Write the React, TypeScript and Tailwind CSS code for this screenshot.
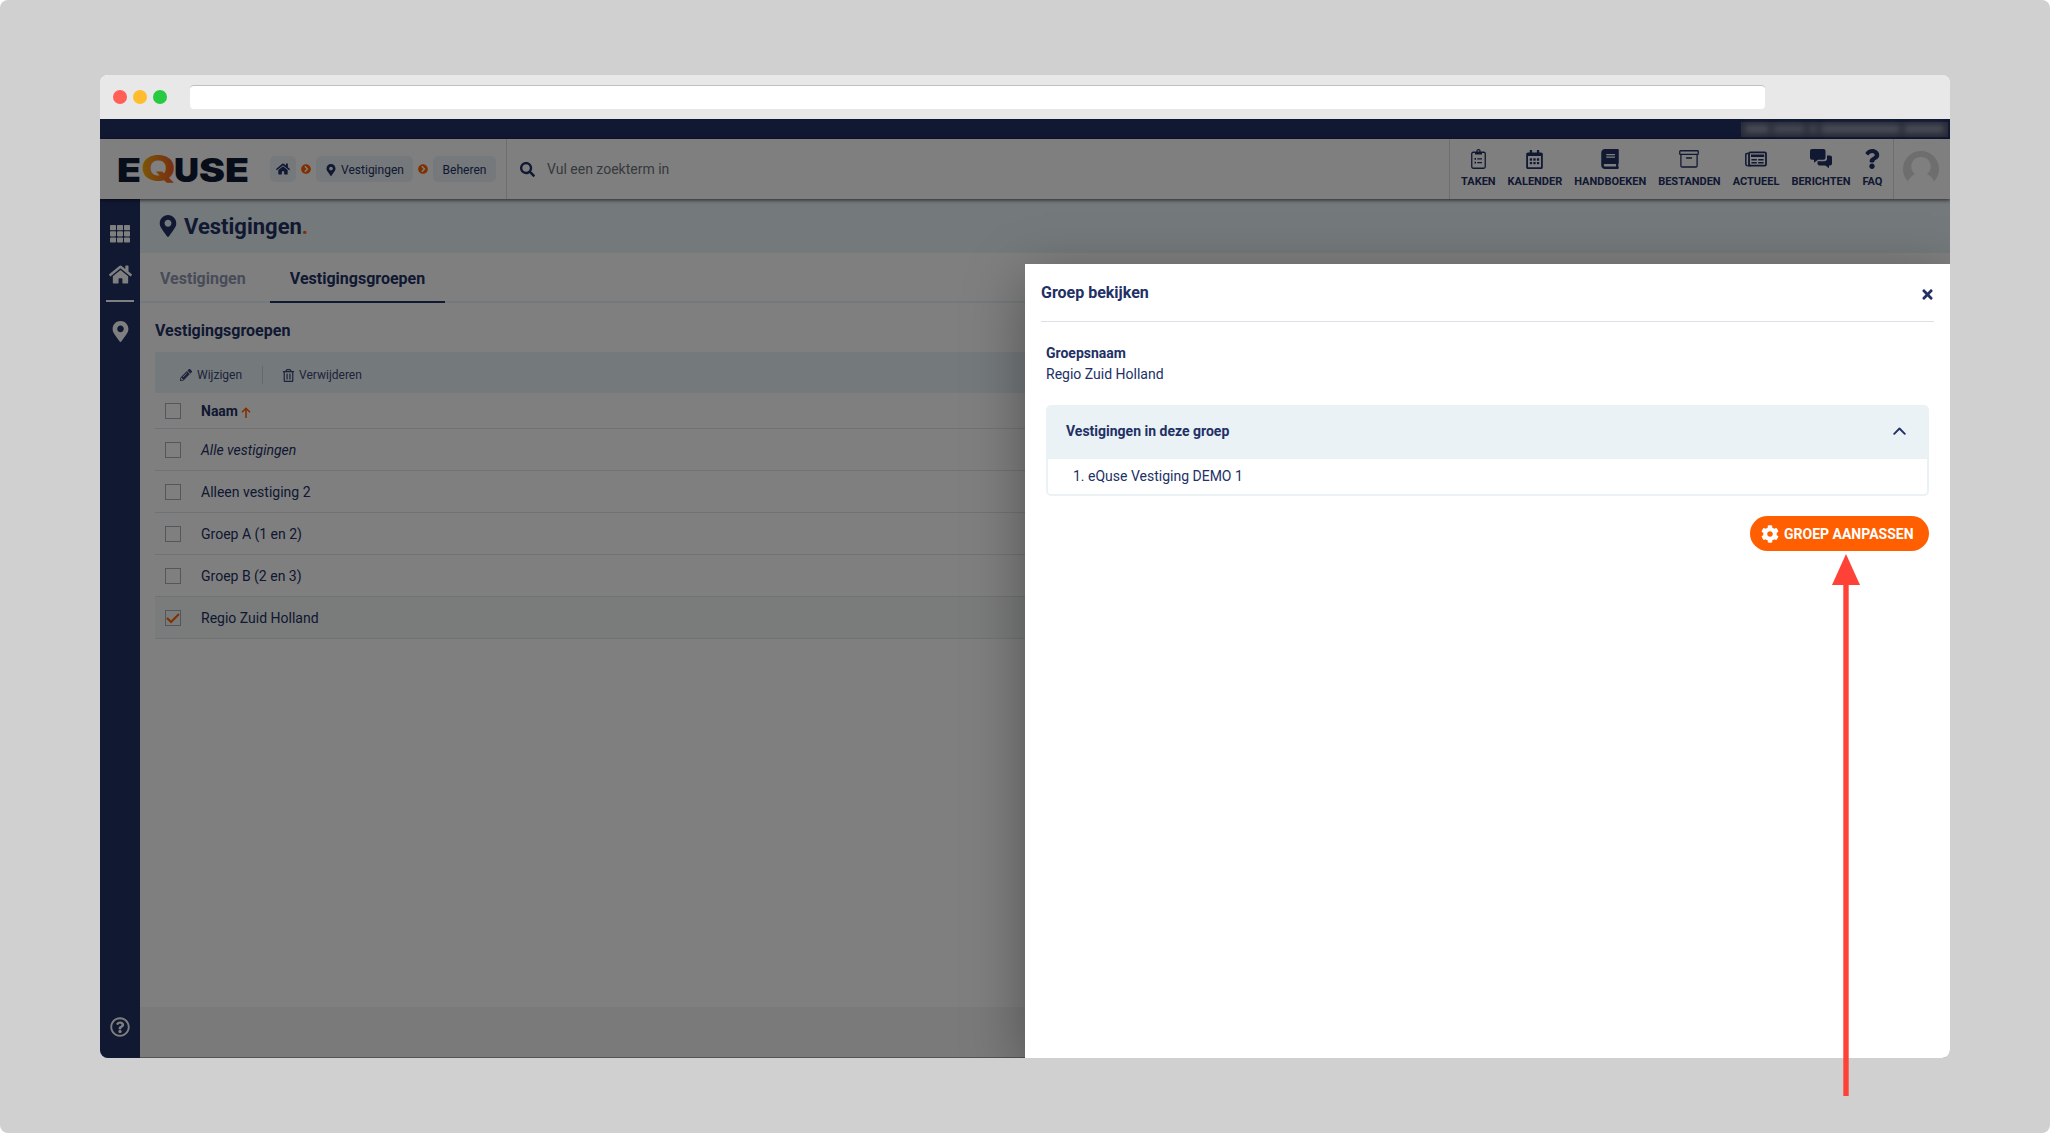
import type { ReactNode } from "react"
import {
  FaBook,
  FaChevronCircleRight,
  FaCog,
  FaHome,
  FaMapMarkerAlt,
  FaPencilAlt,
  FaQuestion,
  FaRegCalendarAlt,
  FaRegQuestionCircle,
  FaRegTrashAlt,
  FaSearch,
  FaTimes,
} from "react-icons/fa"

const rows = [
  { name: "Alle vestigingen", italic: true },
  { name: "Alleen vestiging 2" },
  { name: "Groep A (1 en 2)" },
  { name: "Groep B (2 en 3)" },
  { name: "Regio Zuid Holland", checked: true },
]

function ClipboardIcon() {
  return (
    <svg width="15" height="20" viewBox="0 0 15 20" fill="none" stroke="currentColor">
      <rect x="0.75" y="3.25" width="13.5" height="16" rx="1.5" strokeWidth="1.3" />
      <path d="M4 3h7v2.500H4z" fill="currentColor" stroke="none" />
      <circle cx="7.5" cy="2.3" r="1.6" strokeWidth="1.2" />
      <path d="M6.2 9.8H11M6.2 13.6H11" strokeWidth="1.3" />
      <path d="M3.5 9.8H5M3.5 13.6H5" strokeWidth="1.8" />
    </svg>
  )
}

function ArchiveIcon() {
  return (
    <svg width="20" height="18" viewBox="0 0 20 18" fill="none" stroke="currentColor" strokeWidth="1.3">
      <rect x="0.75" y="0.75" width="18.5" height="3.7" rx="0.8" />
      <path d="M1.9 4.5v11.2c0 .8.5 1.3 1.3 1.3h13.6c.8 0 1.3-.5 1.3-1.3V4.5" />
      <path d="M7.5 8h5" strokeLinecap="round" />
    </svg>
  )
}

function NewsIcon() {
  return (
    <svg width="22" height="16" viewBox="0 0 22 16" fill="none" stroke="currentColor">
      <path d="M3.500 2.500H1.800c-.6 0-1 .4-1 1V13c0 1 .7 1.700 1.600 1.700" strokeWidth="1.500" />
      <rect x="4" y="1.300" width="17" height="13.400" rx="1.200" strokeWidth="1.800" />
      <path d="M6 4.800h13.200" strokeWidth="2.400" />
      <path d="M6.400 8.700h5.400M13.200 8.700h5.400M6.400 11.800h5.400M13.200 11.800h5.400" strokeWidth="1.500" />
      <path d="M2.500 14.700H6" strokeWidth="1.800" />
    </svg>
  )
}

function ChatIcon() {
  return (
    <svg width="22" height="20" viewBox="0 0 22 20" fill="currentColor">
      <path d="M2 0h11.500a2 2 0 0 1 2 2v6.800a2 2 0 0 1-2 2H8L4 13.800v-3H2a2 2 0 0 1-2-2V2a2 2 0 0 1 2-2z" />
      <path d="M17 6.500h3a2 2 0 0 1 2 2v6a2 2 0 0 1-2 2h-1V19.300l-3.700-2.800H9.500a2 2 0 0 1-2-2v-2.200h6.800a2.700 2.700 0 0 0 2.700-2.700z" />
    </svg>
  )
}

function GridIcon() {
  return (
    <svg width="20" height="18" viewBox="0 0 20 18" fill="currentColor">
      {[0, 7, 14].map((x) =>
        [0, 6.2, 12.4].map((y) => <rect key={`${x}-${y}`} x={x} y={y} width="6" height="5.2" rx="0.8" />)
      )}
    </svg>
  )
}

function Logo() {
  return (
    <svg width="136" height="56" viewBox="0 -11 136 56" className="block">
      <defs>
        <linearGradient id="q" x1="0" x2="1" y1="0" y2="0">
          <stop offset="0" stopColor="#f9ac12" />
          <stop offset="1" stopColor="#ef5a1d" />
        </linearGradient>
      </defs>
      <g fontFamily="Inter, sans-serif" fontWeight="900" fontSize="33" fill="#0f1a33">
        <text x="-1" y="30" textLength="24" lengthAdjust="spacingAndGlyphs">E</text>
        <text x="56" y="30" textLength="25" lengthAdjust="spacingAndGlyphs">U</text>
        <text x="81" y="30" textLength="26" lengthAdjust="spacingAndGlyphs">S</text>
        <text x="107" y="30" textLength="24" lengthAdjust="spacingAndGlyphs">E</text>
      </g>
      <text
        x="23"
        y="28.500"
        fontFamily="Inter, sans-serif"
        fontWeight="800"
        fontSize="36"
        fill="url(#q)"
        textLength="35"
        lengthAdjust="spacingAndGlyphs"
      >
        Q
      </text>
    </svg>
  )
}

function NavItem({ icon, label }: { icon: ReactNode; label: string }) {
  return (
    <div className="flex flex-col items-center">
      <div className="flex h-5 items-center">{icon}</div>
      <span className="mt-[5px] text-[11px] leading-4 font-bold">{label}</span>
    </div>
  )
}

function Checkbox({ checked }: { checked?: boolean }) {
  return (
    <span className="flex h-4 w-4 items-center justify-center border border-[#a0b0b6]">
      {checked && (
        <svg width="14" height="12" viewBox="0 0 14 12" fill="none" stroke="#ff5f00" strokeWidth="2">
          <path d="M1 6l4 4 8-8" />
        </svg>
      )}
    </span>
  )
}

function Header() {
  return (
    <header className="relative z-10 flex h-[60px] shrink-0 bg-white shadow-[0_1px_4px_rgba(0,0,0,0.7)]">
      <div className="flex w-[407px] items-center border-r border-[#dcdcdc] pl-[18px]">
        <div className="w-[152px]">
          <Logo />
        </div>
        <div className="flex items-center gap-[5px] text-[12px]">
          <span className="flex h-[26px] w-[26px] items-center justify-center rounded-[5px] bg-[#eaf2f6]">
            <FaHome size={14} />
          </span>
          <FaChevronCircleRight size={10} color="#ff5f00" />
          <span className="flex h-[26px] w-[97px] items-center justify-center gap-1 rounded-[5px] bg-[#eaf2f6] pt-px">
            <FaMapMarkerAlt size={12} />
            Vestigingen
          </span>
          <FaChevronCircleRight size={10} color="#ff5f00" />
          <span className="flex h-[26px] w-[63px] items-center justify-center rounded-[5px] bg-[#eaf2f6] pt-px">
            Beheren
          </span>
        </div>
      </div>
      <div className="flex flex-1 items-center gap-3 pl-[13px] text-[#6c757d]">
        <FaSearch size={15} color="#223065" />
        <span className="text-[14px]">Vul een zoekterm in</span>
      </div>
      <nav className="flex w-[445px] items-start gap-3 border-r border-l border-[#dcdcdc] pt-[10px] pl-[11px]">
        <NavItem icon={<ClipboardIcon />} label="TAKEN" />
        <NavItem icon={<FaRegCalendarAlt size={19} />} label="KALENDER" />
        <NavItem icon={<FaBook size={20} />} label="HANDBOEKEN" />
        <NavItem icon={<ArchiveIcon />} label="BESTANDEN" />
        <NavItem icon={<NewsIcon />} label="ACTUEEL" />
        <NavItem icon={<ChatIcon />} label="BERICHTEN" />
        <NavItem icon={<FaQuestion size={20} />} label="FAQ" />
      </nav>
      <div className="flex w-14 items-center pl-[9px]">
        <svg width="36" height="36" viewBox="0 0 36 36">
          <circle cx="18" cy="18" r="18" fill="#dcdcdc" />
          <path
            d="M18 6a9.500 9.500 0 0 1 6 17c3 1.500 5 3.500 7 7l-3 6H8l-3-6c2-3.500 4-5.500 7-7A9.500 9.500 0 0 1 18 6z"
            fill="#fff"
          />
        </svg>
      </div>
    </header>
  )
}

function Sidebar() {
  return (
    <aside className="flex w-10 shrink-0 flex-col items-center bg-[#223065] text-white">
      <div className="mt-[26px]">
        <GridIcon />
      </div>
      <FaHome size={23} className="mt-5" />
      <div className="mt-[14px] h-[2px] w-7 bg-white" />
      <FaMapMarkerAlt size={21} className="mt-[19px]" />
      <FaRegQuestionCircle size={20} className="mt-auto mb-[21px]" />
    </aside>
  )
}

function Content() {
  return (
    <main className="flex flex-1 flex-col">
      <div className="flex h-[54px] items-center gap-[5px] bg-[#e9f2f6] pl-[17px]">
        <FaMapMarkerAlt size={22} />
        <h1 className="text-[22px] font-bold">
          Vestigingen<span className="text-[#ff5f00]">.</span>
        </h1>
      </div>
      <div className="flex h-[50px] border-b-2 border-[#e9f2f6] text-[16px] font-bold">
        <span className="w-[130px] pt-[14px] pl-5 text-[#9097b2]">Vestigingen</span>
        <span className="h-[50px] w-[175px] border-b-2 border-[#223065] pt-[14px] text-center">
          Vestigingsgroepen
        </span>
      </div>
      <div className="flex flex-1 flex-col pl-[15px]">
        <h2 className="h-[49px] pt-4 text-[16px] font-bold">Vestigingsgroepen</h2>
        <div className="flex h-[41px] items-center bg-[#e9f2f6] pt-[5px] pl-[25px] text-[12px] text-[#3a4677]">
          <FaPencilAlt size={12} className="mr-[5px]" />
          Wijzigen
          <span className="mr-[19px] ml-5 h-[18px] w-px bg-[#ccd4d8]" />
          <FaRegTrashAlt size={13} className="mr-1" />
          Verwijderen
        </div>
        <div className="flex h-9 items-center border-b border-[#dfe7eb] pt-px pl-[10px] text-[14px] font-bold">
          <Checkbox />
          <span className="ml-5">Naam</span>
          <svg
            width="10"
            height="11"
            viewBox="0 0 10 11"
            fill="none"
            stroke="#ff5f00"
            strokeWidth="1.6"
            className="mt-[3px] ml-[3px]"
          >
            <path d="M5 11V1.500M1 5.300l4-4 4 4" />
          </svg>
        </div>
        {rows.map((row) => (
          <div
            key={row.name}
            className={`flex h-[42px] items-center border-b border-[#dfe7eb] pt-px pl-[10px] text-[14px] ${row.checked ? "bg-[#f4f8f6]" : ""}`}
          >
            <Checkbox checked={row.checked} />
            <span className={`ml-5 ${row.italic ? "italic" : ""}`}>{row.name}</span>
          </div>
        ))}
      </div>
      <footer className="h-[51px] border-b border-[#a8a8a8] bg-[#f4f4f4]" />
    </main>
  )
}

function Drawer() {
  return (
    <section className="absolute right-0 bottom-0 z-30 flex h-[794px] w-[925px] flex-col bg-white px-4 shadow-[0_15px_55px_rgba(0,0,0,0.35)]">
      <div className="flex h-[58px] items-center justify-between border-b border-[#dcdfe5] pt-px">
        <h2 className="text-[16px] font-bold">Groep bekijken</h2>
        <FaTimes size={15} className="mt-[2px] -mr-px" />
      </div>
      <div className="flex flex-col px-[5px] pt-[21px] text-[14px] leading-[21px]">
        <span className="font-bold">Groepsnaam</span>
        <span>Regio Zuid Holland</span>
        <div className="mt-5 rounded-[5px] border-2 border-[#eaf2f6]">
          <div className="flex h-[52px] items-center justify-between bg-[#eaf2f6] pr-[21px] pb-1 pl-[18px] font-bold">
            Vestigingen in deze groep
            <svg
              width="13"
              height="8"
              viewBox="0 0 13 8"
              fill="none"
              stroke="currentColor"
              strokeWidth="1.9"
              strokeLinecap="round"
              strokeLinejoin="round"
            >
              <path d="M1.200 6.800l5.300-5.300 5.300 5.300" />
            </svg>
          </div>
          <div className="flex h-[35px] items-center pl-[25px]">1. eQuse Vestiging DEMO 1</div>
        </div>
        <button className="mt-5 flex h-[35px] w-[179px] items-center gap-[5px] self-end rounded-full bg-[#ff5f00] pt-px pl-[11px] font-bold text-white">
          <FaCog size={18} />
          GROEP AANPASSEN
        </button>
      </div>
    </section>
  )
}

export default function App() {
  return (
    <div className="bg-white">
      <div className="relative flex h-[1133px] w-[2050px] justify-center rounded-lg bg-[#d0d0d0] pt-[75px] font-['Roboto',sans-serif] text-[#223065]">
        <div className="flex h-[983px] w-[1850px] flex-col overflow-hidden rounded-lg bg-white">
          <div className="flex h-11 shrink-0 items-center bg-[#e8e8e8] pl-[13px]">
            <span className="h-[14px] w-[14px] rounded-full bg-[#ff5f57]" />
            <span className="ml-[6px] h-[14px] w-[14px] rounded-full bg-[#ffbd2e]" />
            <span className="ml-[6px] h-[14px] w-[14px] rounded-full bg-[#28ca42]" />
            <span className="ml-[23px] h-6 w-[1575px] rounded-[4px] border-t border-[#bfbfbf] bg-white" />
          </div>
          <div className="relative flex flex-1 flex-col">
            <div className="flex h-5 shrink-0 items-center justify-end overflow-hidden bg-[#223065] pr-[2px]">
              <div className="flex h-[15px] w-[207px] items-center gap-1 bg-[#4e5570] px-1">
                <span className="h-2 w-6 bg-[#9a9eb0] blur-[3px]" />
                <span className="h-2 w-8 bg-[#8f94a8] blur-[3px]" />
                <span className="h-2 w-2 bg-[#8f94a8] blur-[3px]" />
                <span className="h-2 w-20 bg-[#9a9eb0] blur-[3px]" />
                <span className="h-2 w-10 bg-[#9a9eb0] blur-[3px]" />
              </div>
            </div>
            <Header />
            <div className="flex flex-1">
              <Sidebar />
              <Content />
            </div>
            <div className="absolute inset-0 z-20 bg-black/50" />
            <Drawer />
          </div>
        </div>
        <svg width="28" height="544" viewBox="0 0 28 544" className="absolute top-[553px] left-[1832px] z-40" fill="#ff4238">
          <path d="M14 1L28 32H0z" />
          <path d="M11.300 31h5.400v512h-5.400z" />
        </svg>
      </div>
    </div>
  )
}
